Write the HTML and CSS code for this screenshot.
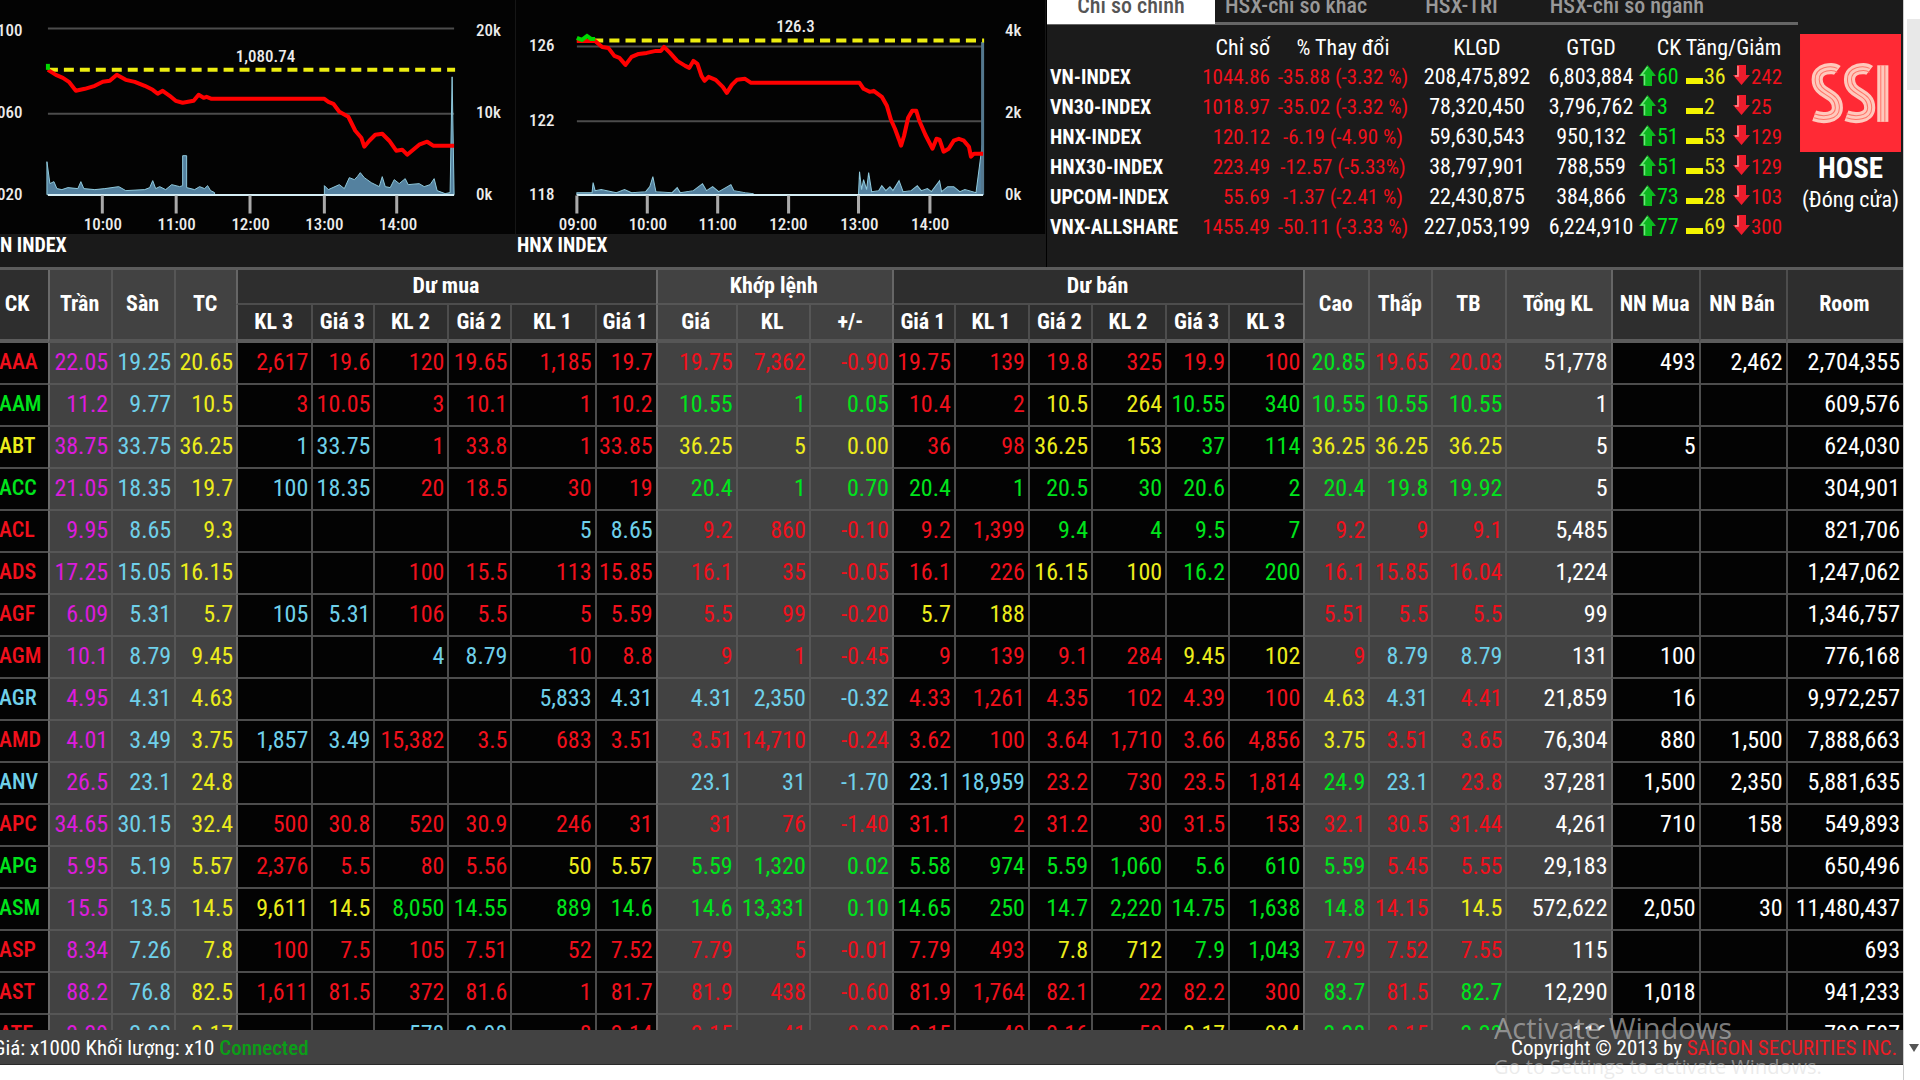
FILE: index.html
```html
<!DOCTYPE html>
<html lang="vi">
<head>
<meta charset="utf-8">
<title>Bảng giá HOSE</title>
<link rel="stylesheet" href="styles.css">
</head>
<body>
<div class="window">
  <main class="board">
    <header class="top">
      <figure class="chart">
        <svg class="plot" viewBox="0 0 516 234" role="img" aria-label="VN Index">
          <path class="grid" d="M48 28.500H455M48 114H455"/>
          <path class="volume" d="M47 195V162L50 184L54 182L57 189L62 190L68 188L78 189L81 182L84 189L95 190L105 189L119 187L126 191L145 190L150 188L153 181L156 189L160 187L166 190L172 185L180 187L183 186V156H187V188L195 190L200 187L205 189L208 186L211 191L215 193V195ZM325 195V186L329 190L340 185L345 189L350 178L355 180L358 177L361 173L365 178L372 183L380 187L383 177L386 187L391 188L395 180L400 184L406 179L409 185L420 184L425 187L431 185L435 179L438 191L446 194L451 193L453 77L455 195Z"/>
          <path class="axis" d="M48 195.500H455"/>
          <path class="tick" d="M102.500 196V214M176.500 196V214M250.500 196V214M325 196V214M397.500 196V214"/>
          <path class="reference" d="M48 70H456"/>
          <path class="price" d="M48 70L56 75L63 78L69 82L76 91L85 89L95 86L103 82L110 81L117 75L126 80L135 82L145 86L153 90L158 94L163 91L170 96L176 101L183 103L194 101L199 95L204 98L207 97L212 99H325L329 102L334 104L340 112L349 117L356 131L362 138L365 147L370 141L376 135L383 134L390 141L397 151L403 150L408 155L414 150L420 145L428 142L434 146H455"/>
          <path class="rise" d="M48 64V70"/>
          <g class="label">
            <text x="-3" y="36">100</text><text x="-3" y="118">060</text><text x="-3" y="200">020</text>
            <text x="477" y="36">20k</text><text x="477" y="118">10k</text><text x="477" y="200">0k</text>
            <text x="266" y="62" text-anchor="middle">1,080.74</text>
            <g text-anchor="middle"><text x="103" y="230">10:00</text><text x="177" y="230">11:00</text><text x="251" y="230">12:00</text><text x="325" y="230">13:00</text><text x="399" y="230">14:00</text></g>
          </g>
        </svg>
        <figcaption>N INDEX</figcaption>
      </figure>
      <figure class="chart">
        <svg class="plot" viewBox="0 0 530 234" role="img" aria-label="HNX Index">
          <g transform="translate(-6 0) scale(1.015 1)">
            <path class="grid" d="M66 46.500H467M66 121.500H467"/>
            <path class="volume" d="M66 195V193L81 193L82 183L84 191L90 190L105 193L113 190L120 193L134 192L138 187L141 177L144 192L160 193L165 188L168 193L181 191L190 184L194 191L200 187L206 192L213 188L218 185L221 191L232 193L240 194V195ZM344 195L345 172L347 190L349 180L352 190L354 173L357 192L364 191L367 186L371 191L375 187L378 191L384 181L388 192L396 191L402 186L406 191L412 189L416 192L424 181L426 192L432 187L438 187L444 192L449 190L460 193L466 146H467V195Z"/>
            <path class="close" d="M466.500 42V195"/>
            <path class="axis" d="M66 195.500H467"/>
            <path class="tick" d="M66 196V214M135.500 196V214M205 196V214M275 196V214M344 196V214M414.500 196V214"/>
            <path class="reference" d="M66 40.500H468"/>
            <path class="price" d="M66 41H84L91 47L97 48L103 56L108 58L114 65L120 57L127 54L135 53L144 51L149 51L152 47L158 53L165 61L173 66L177 68L181 61L185 64L189 76L192 81L196 77L203 80L210 87L214 93L219 85L224 80L232 79L238 83H345L349 89L355 92L359 91L367 97L372 106L376 120L380 129L384 140L386 146L389 136L393 118L397 111L401 111L404 121L410 135L417 149L421 139L424 140L428 152L433 149L438 141L443 139L448 141L453 147L455 157L458 154H467"/>
            <path class="rise" d="M66 38L71 40L76 36L80 39L84 39"/>
          </g>
          <g class="label">
            <text x="13" y="51">126</text><text x="13" y="126">122</text><text x="13" y="200">118</text>
            <text x="490" y="36">4k</text><text x="490" y="118">2k</text><text x="490" y="200">0k</text>
            <text x="280" y="32" text-anchor="middle">126.3</text>
            <g text-anchor="middle"><text x="62" y="230">09:00</text><text x="132" y="230">10:00</text><text x="202" y="230">11:00</text><text x="273" y="230">12:00</text><text x="344" y="230">13:00</text><text x="415" y="230">14:00</text></g>
          </g>
        </svg>
        <figcaption>HNX INDEX</figcaption>
      </figure>
      <section class="market">
        <div class="indices">
          <nav class="tabs">
            <button class="tab active">Chỉ số chính</button>
            <button class="tab">HSX-chỉ số khác</button>
            <button class="tab">HSX-TRI</button>
            <button class="tab">HSX-chỉ số ngành</button>
          </nav>
          <table class="index-table">
            <colgroup><col style="width:148px"><col style="width:80px"><col style="width:136px"><col style="width:132px"><col style="width:96px"><col style="width:47px"><col style="width:49px"><col style="width:64px"></colgroup>
            <thead><tr><th></th><th class="end">Chỉ số</th><th>% Thay đổi</th><th>KLGD</th><th>GTGD</th><th colspan="3">CK Tăng/Giảm</th></tr></thead>
            <tbody id="indices"></tbody>
          </table>
        </div>
        <aside class="brand">
          <svg class="logo" viewBox="0 0 100 117" role="img" aria-label="SSI">
            <rect width="100" height="117" fill="#ff2a35"/>
            <g fill="none" stroke="#ffc9bd" stroke-width="11">
              <path d="M37 36C33 33 17 33 17 45C17 61 37 57 37 73C37 84 22 84 14 81"/>
              <path d="M69 36C65 33 49 33 49 45C49 61 69 57 69 73C69 84 54 84 46 81"/>
              <path d="M82 31V87"/>
            </g>
            <g fill="none" stroke="#ff7468" stroke-width="1">
              <path d="M37 34C31 31 15 32 15 45C15 62 35 58 35 73C35 82 22 82 14 79M37 38C33 35 19 35 19 45C19 59 39 56 39 73C39 86 22 86 14 83"/>
              <path d="M69 34C63 31 47 32 47 45C47 62 67 58 67 73C67 82 54 82 46 79M69 38C65 35 51 35 51 45C51 59 71 56 71 73C71 86 54 86 46 83"/>
              <path d="M80 31V87M84 31V87"/>
            </g>
          </svg>
          <strong>HOSE</strong>
          <span>(Đóng cửa)</span>
        </aside>
      </section>
    </header>
    <div class="quotes">
      <table class="quote-table">
        <colgroup id="columns"></colgroup>
        <thead>
          <tr>
            <th rowspan="2" class="symbol">CK</th><th rowspan="2" class="lit edge">Trần</th><th rowspan="2" class="lit">Sàn</th><th rowspan="2" class="lit">TC</th>
            <th colspan="6" class="edge">Dư mua</th><th colspan="3" class="lit edge">Khớp lệnh</th><th colspan="6" class="edge">Dư bán</th>
            <th rowspan="2" class="lit edge">Cao</th><th rowspan="2" class="lit">Thấp</th><th rowspan="2" class="lit">TB</th><th rowspan="2" class="lit">Tổng KL</th>
            <th rowspan="2" class="edge">NN Mua</th><th rowspan="2">NN Bán</th><th rowspan="2">Room</th>
          </tr>
          <tr>
            <th class="edge">KL 3</th><th>Giá 3</th><th>KL 2</th><th>Giá 2</th><th>KL 1</th><th>Giá 1</th>
            <th class="lit edge">Giá</th><th class="lit">KL</th><th class="lit">+/-</th>
            <th class="edge">Giá 1</th><th>KL 1</th><th>Giá 2</th><th>KL 2</th><th>Giá 3</th><th>KL 3</th>
          </tr>
        </thead>
        <tbody id="quotes"></tbody>
      </table>
    </div>
    <footer class="status">
      <span>Giá: x1000 Khối lượng: x10 <b class="connected">Connected</b></span>
      <span>Copyright © 2013 by <a href="#">SAIGON SECURITIES INC.</a></span>
    </footer>
  </main>
  <div class="scrollbar"><i class="thumb"></i><i class="arrow"></i></div>
</div>
<div class="activation"><p>Activate Windows</p><small>Go to Settings to activate Windows.</small></div>
<script src="script.js"></script>
</body>
</html>
```
FILE: styles.css
```css
* { box-sizing: border-box; }

body {
  margin: 0;
  overflow: hidden;
  background: #fff;
  color: #fff;
  font-family: "Roboto Condensed", "Liberation Sans", sans-serif;
  font-size: 22px;
}

.window {
  display: grid;
  grid-template-columns: minmax(0, 1fr) 17px;
  height: 100vh;
}

.board {
  display: flex;
  flex-direction: column;
  min-width: 0;
  min-height: 0;
  padding-bottom: 15px;
}

/* Charts and market summary */
.top {
  display: grid;
  grid-template-columns: 516fr 530fr 857fr;
  flex: none;
  background: #1a1a1a;
}

.chart { margin: 0; }

.plot {
  display: block;
  width: 100%;
  background: #030303;
  border-right: 1px solid #161616;
}

.chart figcaption {
  height: 33px;
  font-size: 20px;
  font-weight: 700;
  line-height: 22px;
}

.chart + .chart figcaption { padding-left: 1px; }

.plot path { fill: none; }
.plot .grid { stroke: #4c4c4c; stroke-width: 2; }
.plot .volume { fill: #54819f; stroke: #8fc9dc; stroke-width: 1; }
.plot .close { stroke: #54788f; stroke-width: 3; }
.plot .axis { stroke: #d5eef5; stroke-width: 2; }
.plot .tick { stroke: #aaa; stroke-width: 3; }
.plot .reference { stroke: #eded10; stroke-width: 4; stroke-dasharray: 10 6; }
.plot .price { stroke: #f00; stroke-width: 4; stroke-linejoin: round; }
.plot .rise { stroke: #00d800; stroke-width: 4; }
.plot .label { fill: #ececec; font-size: 17px; font-weight: 500; }

.market {
  display: grid;
  grid-template-columns: minmax(0, 1fr) 105px;
  border-left: 1px solid #000;
  background: #1b1b1b;
}

.tabs {
  display: flex;
  gap: 10px;
  height: 25px;
  border-bottom: 3px solid #666;
}

.tab {
  display: flex;
  align-items: flex-end;
  justify-content: center;
  height: 24px;
  padding: 0 24px 5px 0;
  border: 0;
  background: none;
  color: #999;
  font: 500 22px/26px "Roboto Condensed", "Liberation Sans", sans-serif;
  white-space: nowrap;
}

.tab:nth-child(3) { padding: 0 42px 5px 24px; }

.tab.active {
  width: 168px;
  padding: 0 0 5px;
  background: #fff;
  color: #555;
}

.index-table {
  width: 100%;
  margin-top: 8px;
  border-collapse: collapse;
  table-layout: fixed;
}

.index-table th,
.index-table td {
  height: 30px;
  padding: 0;
  line-height: 28px;
  text-align: center;
  white-space: nowrap;
}

.index-table thead th { height: 29px; font-weight: 400; }
.index-table tbody th { padding-left: 3px; font-size: 20px; font-weight: 700; text-align: left; }
.index-table td.r { font-size: 21px; }
.index-table .end { padding-right: 5px; text-align: right; }
.index-table .count { text-align: left; }

.mark { display: inline-block; width: 17px; height: 22px; margin-right: 1px; vertical-align: -3px; }
.mark.down { margin-left: -2px; }

.brand {
  display: flex;
  flex-direction: column;
  align-items: center;
  padding: 34px 2px 0;
}

.logo { display: block; width: 100%; }
.brand strong { font-size: 29px; line-height: 32px; }
.brand span { line-height: 32px; }

/* Price board */
.quotes {
  flex: 1;
  min-height: 0;
  overflow: hidden;
  border-top: 3px solid #5c5c5c;
  background: #030303;
}

.quote-table {
  width: 100%;
  border-collapse: separate;
  border-spacing: 0;
  table-layout: fixed;
}

.quote-table th,
.quote-table td {
  overflow: hidden;
  border: 0 solid #4d4d4d;
  border-left-width: 2px;
  border-bottom-width: 2px;
  white-space: nowrap;
}

.quote-table tr > :first-child:not(.edge) { border-left-width: 0; }
.quote-table .edge { border-left-color: #666; }
.quote-table thead th { padding: 0 2px 0 0; background: #2e2e2e; font-size: 22px; font-weight: 700; line-height: 30px; }
.quote-table thead .symbol { padding-right: 14px; }
.quote-table thead tr { height: 35px; }
.quote-table thead tr + tr { height: 38px; }
.quote-table thead tr + tr th,
.quote-table thead [rowspan] { border-bottom: 4px solid #5c5c5c; }
.quote-table thead .lit,
.quote-table td.lit { background: #424242; border-color: #565656; }
.quote-table thead .lit.edge,
.quote-table td.lit.edge { border-left-color: #6a6a6a; }

.quote-table tbody tr { height: 42px; }
.quote-table td { padding: 0 3px 2px 0; font-size: 24px; line-height: 34px; text-align: right; }
.quote-table tbody th { padding: 0 0 2px; font-size: 22px; font-weight: 500; line-height: 34px; text-align: left; text-indent: -1px; }

.r { color: #f0101c; }
.g { color: #00e41c; }
.y { color: #ecec1c; }
.c { color: #6fd0ea; }
.m { color: #dc1cdc; }

/* Status bar */
.status {
  display: flex;
  flex: none;
  justify-content: space-between;
  height: 35px;
  padding: 0 6px 0 0;
  border-bottom: 1px solid #2a2a2a;
  background: #424242;
  font-size: 21px;
  line-height: 37px;
}

.status span:first-child { margin-left: -7px; }
.connected { color: #0b9e18; font-weight: 500; }
.status a { color: #ee1c24; text-decoration: none; }

.scrollbar {
  display: flex;
  flex-direction: column;
  justify-content: space-between;
  align-items: center;
  padding: 19px 0 28px 3px;
  border-left: 1px solid #ccc;
  background: #fff;
}

.thumb { width: 100%; height: 71px; background: #e8e8e8; }
.arrow { border: 5px solid transparent; border-top: 8px solid #555; border-bottom: 0; }

.activation {
  position: absolute;
  right: 80px;
  bottom: 0;
  width: 346px;
  height: 74px;
  overflow: hidden;
  color: rgba(190, 190, 190, 0.65);
  font-family: "Open Sans", sans-serif;
  pointer-events: none;
}

.activation p { margin: 0; font-size: 29px; line-height: 44px; }
.activation small { display: block; color: rgba(215, 215, 215, 0.5); font-size: 20px; line-height: 34px; white-space: nowrap; }
```
FILE: script.js
```js
// Column widths, in proportion to one another.
const widths = [48, 63, 63, 62, 75, 62, 74, 63, 84, 61, 80, 73, 83, 62, 74, 63, 74, 63, 75, 65, 63, 74, 105, 88, 87, 117];
const lit = [1, 2, 3, 10, 11, 12, 19, 20, 21, 22];
const edges = [1, 4, 10, 13, 19, 23];

// One line per symbol; a leading letter gives the colour, "-" is an empty cell.
const quotes = `
rAAA m22.05 c19.25 y20.65 r2,617 r19.6 r120 r19.65 r1,185 r19.7 r19.75 r7,362 r-0.90 r19.75 r139 r19.8 r325 r19.9 r100 g20.85 r19.65 r20.03 w51,778 w493 w2,462 w2,704,355
gAAM m11.2 c9.77 y10.5 r3 r10.05 r3 r10.1 r1 r10.2 g10.55 g1 g0.05 r10.4 r2 y10.5 y264 g10.55 g340 g10.55 g10.55 g10.55 w1 - - w609,576
yABT m38.75 c33.75 y36.25 c1 c33.75 r1 r33.8 r1 r33.85 y36.25 y5 y0.00 r36 r98 y36.25 y153 g37 g114 y36.25 y36.25 y36.25 w5 w5 - w624,030
gACC m21.05 c18.35 y19.7 c100 c18.35 r20 r18.5 r30 r19 g20.4 g1 g0.70 g20.4 g1 g20.5 g30 g20.6 g2 g20.4 g19.8 g19.92 w5 - - w304,901
rACL m9.95 c8.65 y9.3 - - - - c5 c8.65 r9.2 r860 r-0.10 r9.2 r1,399 g9.4 g4 g9.5 g7 r9.2 r9 r9.1 w5,485 - - w821,706
rADS m17.25 c15.05 y16.15 - - r100 r15.5 r113 r15.85 r16.1 r35 r-0.05 r16.1 r226 y16.15 y100 g16.2 g200 r16.1 r15.85 r16.04 w1,224 - - w1,247,062
rAGF m6.09 c5.31 y5.7 c105 c5.31 r106 r5.5 r5 r5.59 r5.5 r99 r-0.20 y5.7 y188 - - - - r5.51 r5.5 r5.5 w99 - - w1,346,757
rAGM m10.1 c8.79 y9.45 - - c4 c8.79 r10 r8.8 r9 r1 r-0.45 r9 r139 r9.1 r284 y9.45 y102 r9 c8.79 c8.79 w131 w100 - w776,168
cAGR m4.95 c4.31 y4.63 - - - - c5,833 c4.31 c4.31 c2,350 c-0.32 r4.33 r1,261 r4.35 r102 r4.39 r100 y4.63 c4.31 r4.41 w21,859 w16 - w9,972,257
rAMD m4.01 c3.49 y3.75 c1,857 c3.49 r15,382 r3.5 r683 r3.51 r3.51 r14,710 r-0.24 r3.62 r100 r3.64 r1,710 r3.66 r4,856 y3.75 r3.51 r3.65 w76,304 w880 w1,500 w7,888,663
cANV m26.5 c23.1 y24.8 - - - - - - c23.1 c31 c-1.70 c23.1 c18,959 r23.2 r730 r23.5 r1,814 g24.9 c23.1 r23.8 w37,281 w1,500 w2,350 w5,881,635
rAPC m34.65 c30.15 y32.4 r500 r30.8 r520 r30.9 r246 r31 r31 r76 r-1.40 r31.1 r2 r31.2 r30 r31.5 r153 r32.1 r30.5 r31.44 w4,261 w710 w158 w549,893
gAPG m5.95 c5.19 y5.57 r2,376 r5.5 r80 r5.56 y50 y5.57 g5.59 g1,320 g0.02 g5.58 g974 g5.59 g1,060 g5.6 g610 g5.59 r5.45 r5.55 w29,183 - - w650,496
gASM m15.5 c13.5 y14.5 y9,611 y14.5 g8,050 g14.55 g889 g14.6 g14.6 g13,331 g0.10 g14.65 g250 g14.7 g2,220 g14.75 g1,638 g14.8 r14.15 y14.5 w572,622 w2,050 w30 w11,480,437
rASP m8.34 c7.26 y7.8 r100 r7.5 r105 r7.51 r52 r7.52 r7.79 r5 r-0.01 r7.79 r493 y7.8 y712 g7.9 g1,043 r7.79 r7.52 r7.55 w115 - - w693
rAST m88.2 c76.8 y82.5 r1,611 r81.5 r372 r81.6 r1 r81.7 r81.9 r438 r-0.60 r81.9 r1,764 r82.1 r22 r82.2 r300 g83.7 r81.5 g82.7 w12,290 w1,018 - w941,233
rATE m3.39 c2.98 y3.17 - - c578 c2.98 r8 r3.14 r3.15 r41 r-0.02 r3.15 r40 r3.16 r50 y3.17 y994 g3.38 r3.15 g3.20 w116 - - w790,507
`.trim().split("\n");

const indices = [
  ["VN-INDEX", "1044.86", "-35.88 (-3.32 %)", "208,475,892", "6,803,884", 60, 36, 242],
  ["VN30-INDEX", "1018.97", "-35.02 (-3.32 %)", "78,320,450", "3,796,762", 3, 2, 25],
  ["HNX-INDEX", "120.12", "-6.19 (-4.90 %)", "59,630,543", "950,132", 51, 53, 129],
  ["HNX30-INDEX", "223.49", "-12.57 (-5.33%)", "38,797,901", "788,559", 51, 53, 129],
  ["UPCOM-INDEX", "55.69", "-1.37 (-2.41 %)", "22,430,875", "384,866", 73, 28, 103],
  ["VNX-ALLSHARE", "1455.49", "-50.11 (-3.33 %)", "227,053,199", "6,224,910", 77, 69, 300],
];

const mark = (kind, shape) => `<svg class="mark ${kind}" viewBox="0 0 17 22">${shape}</svg>`;
const up = mark("up", '<path d="M8.500 0L17 11H13V21H4.500V11H0Z" fill="#0cba20"/><path d="M8.500 2L2.500 10H5.500V20" fill="none" stroke="#6ee67a" stroke-width="1.500"/>');
const flat = mark("flat", '<path d="M0 13H17V19H0Z" fill="#f5f500"/>');
const down = mark("down", '<path d="M4 0H13V10H17L8.500 20L0 10H4Z" fill="#ee1c2c"/><path d="M5 1V11H2" fill="none" stroke="#ff8a90" stroke-width="1.500"/>');

document.getElementById("columns").innerHTML = widths.map((w) => `<col style="width:${w}px">`).join("");

document.getElementById("quotes").innerHTML = quotes.map((line) => {
  const cells = line.split(" ").map((cell, i) => {
    const colour = cell === "-" ? "w" : cell[0];
    if (i === 0) return `<th scope="row" class="${colour}">${cell.slice(1)}</th>`;
    const classes = [colour, lit.includes(i) ? "lit" : "", edges.includes(i) ? "edge" : ""].filter(Boolean).join(" ");
    return `<td class="${classes}">${cell.slice(1)}</td>`;
  });
  return `<tr>${cells.join("")}</tr>`;
}).join("");

document.getElementById("indices").innerHTML = indices.map(([name, value, change, volume, turnover, rise, same, fall]) =>
  `<tr><th scope="row">${name}</th><td class="r end">${value}</td><td class="r">${change}</td><td>${volume}</td><td>${turnover}</td>` +
  `<td class="g count">${up}${rise}</td><td class="y count">${flat}${same}</td><td class="r count">${down}${fall}</td></tr>`
).join("");
```
